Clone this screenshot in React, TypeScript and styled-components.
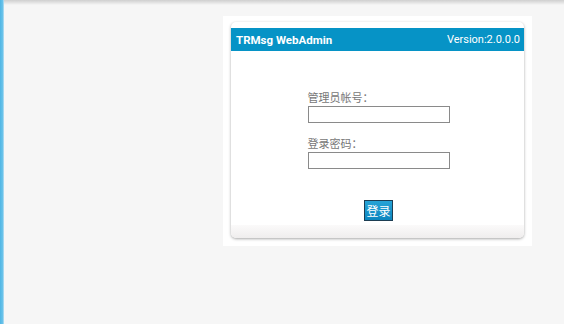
import styled, { createGlobalStyle } from 'styled-components';

const GlobalStyle = createGlobalStyle`
  html, body {
    margin: 0;
    padding: 0;
    height: 100%;
    background: #f6f6f6;
  }
  #root {
    height: 100%;
  }
`;

const LoginPage = () => (
  <>
    <GlobalStyle />
    <Layout>
      <SideBar />
      <Main>
        <TopShade />
        <Panel>
          <Card>
            <CardHeader>
              <Title>TRMsg WebAdmin</Title>
              <Version>Version:2.0.0.0</Version>
            </CardHeader>
            <Form>
              <Field>
                <Label>管理员帐号：</Label>
                <Input type="text" />
              </Field>
              <Field>
                <Label>登录密码：</Label>
                <Input type="password" />
              </Field>
              <Submit type="button">登录</Submit>
            </Form>
            <CardFooter />
          </Card>
        </Panel>
      </Main>
    </Layout>
  </>
);

export default LoginPage;

const Layout = styled.div`
  display: flex;
  width: 564px;
  height: 324px;
  overflow: hidden;
`;

const SideBar = styled.div`
  width: 4px;
  flex: none;
  background: linear-gradient(to right, #4fb6e4 0, #6cc3ea 70%, #c9e6f3 100%);
`;

const Main = styled.div`
  flex: 1;
  display: flex;
  flex-direction: column;
  align-items: flex-start;
`;

const TopShade = styled.div`
  align-self: stretch;
  height: 5px;
  margin-bottom: 11px;
  background: linear-gradient(to bottom, #cfcfcf 0, #e2e2e2 50%, #f6f6f6 100%);
`;

const Panel = styled.div`
  margin-left: 219px;
  width: 293px;
  padding: 6px 8px 8px;
  background: #ffffff;
`;

const Card = styled.div`
  border-radius: 5px;
  background: #ffffff;
  padding-top: 6px;
  box-shadow: 0 1px 3px rgba(0, 0, 0, 0.35);
  overflow: hidden;
`;

const CardHeader = styled.div`
  height: 23px;
  display: flex;
  align-items: center;
  justify-content: space-between;
  padding: 0 4px 0 5px;
  background: #0693c6;
  color: #ffffff;
  font-family: Roboto, 'Liberation Sans', sans-serif;
  font-size: 11px;
`;

const Title = styled.span`
  font-weight: 700;
  font-size: 11.5px;
`;

const Version = styled.span`
  font-size: 11px;
`;

const Form = styled.div`
  display: flex;
  flex-direction: column;
  align-items: center;
  padding: 39px 0 4px;
`;

const Field = styled.div`
  display: flex;
  flex-direction: column;
  width: 142px;
  margin-left: 2px;
  margin-bottom: 13px;
`;

const Label = styled.label`
  font-family: 'Noto Sans CJK SC', sans-serif;
  font-size: 11px;
  line-height: 14px;
  color: #777777;
  margin-bottom: 2px;
`;

const Input = styled.input`
  box-sizing: border-box;
  width: 142px;
  height: 17px;
  margin: 0;
  border: 1px solid #8a8a8a;
  background: #ffffff;
  outline: none;
`;

const Submit = styled.button`
  margin-top: 18px;
  width: 29px;
  height: 21px;
  padding: 0;
  border: 1px solid #1d3d52;
  background: linear-gradient(to bottom, #27a3d6, #0b86bf);
  color: #ffffff;
  font-family: 'Noto Sans CJK SC', sans-serif;
  font-size: 12px;
  line-height: 17px;
  margin-left: 2px;
`;

const CardFooter = styled.div`
  height: 13px;
  background: linear-gradient(to bottom, #fbfafa, #efeded);
`;
